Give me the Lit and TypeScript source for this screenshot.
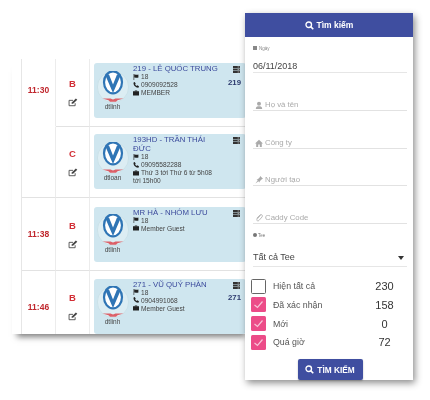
import { LitElement, html, css, svg } from "lit";
import { customElement } from "lit/decorators.js";

const flag = html`<svg class="ic" viewBox="0 0 10 10"><path d="M1 0h1v10H1z"/><path d="M2 1c2-1 3 1 7 0v5c-4 1-5-1-7 0z"/></svg>`;
const phone = html`<svg class="ic" viewBox="0 0 10 10"><path d="M1 1l2-1 1.500 3-1 1c.5 1 1.500 2 2.500 2.500l1-1 3 1.500-1 2.500C4.500 10 0 5 1 1z"/></svg>`;
const brief = html`<svg class="ic" viewBox="0 0 10 10"><path d="M3 2V1h4v1h3v7H0V2zM4 2h2v-.4H4z" fill-rule="evenodd"/></svg>`;
const server = html`<svg class="srv" viewBox="0 0 10 10"><path d="M0 0h10v2.800H0zM0 3.600h10v2.800H0zM0 7.200h10V10H0z"/><path d="M6.500 1h2.500v.8H6.500zM6.500 4.600h2.500v.8H6.500zM6.500 8.200h2.500v.8H6.500z" fill="#fff"/></svg>`;
const edit = html`<svg class="edit" viewBox="0 0 14 12"><path d="M10 7v3.500H1.500V3H7" fill="none" stroke="#444" stroke-width="1.200"/><path d="M5 8l.6-2.500L11 .5l2 1.800L7.500 7.500z" fill="#444"/></svg>`;
const logo = svg`
  <circle cx="16" cy="16" r="15.600" fill="#dcedf3" stroke="#c4dbe3" stroke-width=".6"/>
  <ellipse cx="16" cy="11.300" rx="9" ry="11" fill="#fff" stroke="#2f75b5" stroke-width="2.200"/>
  <path d="M8 3.500l8 18.500 8-18.500h-4L16 13.500 12 3.500z" fill="#2f75b5"/>
  <path d="M5.500 27.500h8l2.500 1 2.500-1h8l-6 1.800-1.500 1.500h-6l-1.500-1.500z" fill="#dc6068"/>`;
const search = html`<svg class="sr" viewBox="0 0 12 12"><circle cx="5" cy="5" r="3.700" fill="none" stroke="#fff" stroke-width="1.800"/><path d="M7.600 7.600L11 11" stroke="#fff" stroke-width="2.200"/></svg>`;

interface Row { time: string; tee: string; h: number; pad: number; user: string; name: string; lines: [string, string][]; code?: string; }
const rows: Row[] = [
  { time: "11:30", tee: "B", h: 68, pad: 4, user: "dtlinh", name: "219 - LÊ QUỐC TRUNG", code: "219", lines: [["f", "18"], ["p", "0909092528"], ["b", "MEMBER"]] },
  { time: "", tee: "C", h: 71, pad: 7, user: "dtloan", name: "193HD - TRẦN THÁI ĐỨC", lines: [["f", "18"], ["p", "09095582288"], ["b", "Thứ 3 tới Thứ 6 từ 5h08 tới 15h00"]] },
  { time: "11:38", tee: "B", h: 73, pad: 8.5, user: "dtlinh", name: "MR HÀ - NHÓM LƯU", lines: [["f", "18"], ["b", "Member Guest"]] },
  { time: "11:46", tee: "B", h: 72, pad: 7.5, user: "dtlinh", name: "271 - VŨ QUÝ PHÀN", code: "271", lines: [["f", "18"], ["p", "0904991068"], ["b", "Member Guest"]] },
];
const icons: Record<string, unknown> = { f: flag, p: phone, b: brief };

const checks = [
  { label: "Hiện tất cả", n: "230", on: false },
  { label: "Đã xác nhận", n: "158", on: true },
  { label: "Mới", n: "0", on: true },
  { label: "Quá giờ", n: "72", on: true },
];

@customElement("app-root")
export class AppRoot extends LitElement {
  static styles = css`
    :host { display: block; position: relative; width: 430px; height: 400px; background: #fff; overflow: hidden; font-family: "Liberation Sans", sans-serif; color: #444; }
    .stage { height: 400px; filter: blur(0.45px); padding-top: 59px; box-sizing: border-box; }
    .table { margin-left: 12px; width: 238px; height: 275px; padding-left: 9px; box-sizing: border-box; overflow: hidden; box-shadow: 0 8px 6px -5px rgba(0,0,0,.5); display: flex; flex-direction: column; background: #fff; }
    .row { display: grid; grid-template-columns: 34px 34px 1fr; border-left: 1px solid #e6e6e6; box-sizing: border-box; flex: none; }
    .cell { border-right: 1px solid #ececec; border-bottom: 1px solid #e2e2e2; display: flex; align-items: center; justify-content: center; box-sizing: border-box; }
    .cell.merged { border-bottom-color: transparent; padding-bottom: 5px; }
    .cell.cardcell { border-right: 0; justify-content: flex-start; align-items: flex-start; padding-left: 4px; }
    .time { font: bold 8.500px "Liberation Sans", sans-serif; color: #c0272d; }
    .teecol { flex-direction: column; gap: 9px; }
    .tee { font: bold 9.500px "Liberation Sans", sans-serif; color: #d22e35; }
    .edit { width: 10px; height: 9px; }
    .card { width: 152px; height: 55px; background: #cfe6ef; border-radius: 3px; display: flex; box-sizing: border-box; position: relative; padding: 1px 4px 2px 2px; flex: none; }
    .logo { width: 33px; flex: none; display: flex; flex-direction: column; align-items: center; font: 6.500px/7px "Liberation Sans", sans-serif; color: #444; padding-top: 6.700px; margin-right: 4px; }
    .logo svg { width: 32px; height: 32px; }
    .info { flex: 1; min-width: 0; font: 6.600px/8px "Liberation Sans", sans-serif; color: #444; padding-right: 22px; }
    .name { font-size: 7.800px; line-height: 9px; color: #3b4a9c; }
    .ln { display: block; }
    .ic { width: 6px; height: 6px; fill: #222; vertical-align: -0.5px; margin-right: 2px; }
    .srv { position: absolute; top: 3px; right: 6px; width: 7px; height: 7px; fill: #333; }
    .code { position: absolute; top: 14.500px; right: 5px; font: bold 7.800px "Liberation Sans", sans-serif; color: #2c3a6e; }

    .panel { position: absolute; left: 245px; top: 13px; width: 168px; height: 367px; background: #fff; box-shadow: 2px 3px 7px rgba(0,0,0,.45); display: flex; flex-direction: column; filter: blur(0.45px); }
    .head { height: 24px; flex: none; background: #3f4ea0; color: #fff; font: bold 8.500px "Liberation Sans", sans-serif; display: flex; align-items: center; justify-content: center; gap: 3px; }
    .sr { width: 9px; height: 9px; }
    .form { padding: 9px 6px 0 8px; display: flex; flex-direction: column; }
    .mini { font: 4.500px "Liberation Sans", sans-serif; color: #888; height: 7px; }
    .mini b { display: inline-block; width: 4px; height: 4px; background: #888; margin-right: 2px; }
    .date { font: 9px/11px "Liberation Sans", sans-serif; color: #444; height: 20px; box-sizing: border-box; padding-top: 8px; border-bottom: 1px solid #e6e6e6; margin-bottom: 22px; }
    .field { height: 16px; box-sizing: border-box; border-bottom: 1px solid #e2e2e2; margin-bottom: 21.500px; font: 7.800px/11px "Liberation Sans", sans-serif; color: #aaa; display: flex; align-items: flex-end; gap: 2px; padding: 0 0 0 2px; }
    .fi { width: 8px; height: 8px; fill: #aaa; margin-bottom: 1px; flex: none; }
    .teeL { font: 4.500px/7px "Liberation Sans", sans-serif; color: #777; height: 7px; margin-top: -13.500px; margin-bottom: 10.500px; }
    .teeL svg { width: 4px; height: 4px; fill: #777; margin-right: 1px; }
    .sel { font: 9px/13px "Liberation Sans", sans-serif; color: #444; height: 18px; box-sizing: border-box; padding: 2px 3px 0 0; display: flex; justify-content: space-between; border-bottom: 1px solid #e6e6e6; margin-bottom: 9.800px; }
    .arrow { width: 0; height: 0; border: 3.500px solid transparent; border-top: 4px solid #333; border-bottom: 0; margin-top: 5px; }
    .chk { display: grid; grid-template-columns: 15px 1fr 26px; align-items: center; height: 18.700px; column-gap: 7px; margin-left: -2px; padding-right: 9.500px; font: 8.800px "Liberation Sans", sans-serif; color: #555; }
    .box { width: 15px; height: 15px; box-sizing: border-box; border-radius: 1.500px; display: flex; }
    .box.off { border: 1.500px solid #666; }
    .box.on { background: #ec4c88; }
    .box svg { width: 15px; height: 15px; }
    .n { font-size: 11px; color: #333; text-align: center; }
    .btnrow { display: flex; justify-content: center; margin-top: 7.500px; }
    .btn { width: 65px; height: 21px; background: #3f4ea0; color: #fff; border-radius: 2px; font: bold 8.300px "Liberation Sans", sans-serif; display: flex; align-items: center; justify-content: center; gap: 3px; box-shadow: 0 1px 2px rgba(0,0,0,.25); }
  `;

  private fieldIcon(k: string) {
    const p: Record<string, string> = {
      user: "M5 1a2.200 2.200 0 0 1 0 5 2.200 2.200 0 0 1 0-5zM1 10c0-3 2-3.500 4-3.500S9 7 9 10z",
      home: "M5 1l5 4.500H8.500V10H6V7H4v3H1.500V5.500H0z",
      pin: "M6.500 0L10 3.500 8.500 4 6 6.500 5.500 8 2 4.500 3.500 4 6 1.500zM3 6L.5 9.500 4 7z",
      clip: "M7 1.500L2.500 6.500c-1 1.500 1 3 2.500 1.500l4-4.500C10 1.500 8 0 6.500 1L2 5.500",
    };
    return k === "clip"
      ? html`<svg class="fi" viewBox="0 0 10 10"><path d=${p[k]} fill="none" stroke="#aaa" stroke-width="1"/></svg>`
      : html`<svg class="fi" viewBox="0 0 10 10"><path d=${p[k]}/></svg>`;
  }

  render() {
    return html`
      <div class="stage">
        <div class="table">
          ${rows.map((r, i) => html`
            <div class="row r${i + 1}" style="height:${r.h}px">
              <div class="cell ${i === 0 ? "merged" : ""}"><span class="time">${r.time}</span></div>
              <div class="cell teecol"><span class="tee">${r.tee}</span>${edit}</div>
              <div class="cell cardcell" style="padding-top:${r.pad}px">
                <div class="card">
                  <div class="logo">
                    <svg viewBox="0 0 32 32">${logo}</svg>
                    <span>${r.user}</span>
                  </div>
                  <div class="info">
                    <div class="name">${r.name}</div>
                    ${r.lines.map(([k, t]) => html`<span class="ln">${icons[k]}${t}</span>`)}
                  </div>
                  ${server}
                  ${r.code ? html`<span class="code">${r.code}</span>` : ""}
                </div>
              </div>
            </div>`)}
        </div>
      </div>
      <aside class="panel">
        <div class="head">${search}<span>Tìm kiếm</span></div>
        <div class="form">
          <div class="mini"><b></b>Ngày</div>
          <div class="date">06/11/2018</div>
          <div class="field">${this.fieldIcon("user")}<span>Họ và tên</span></div>
          <div class="field">${this.fieldIcon("home")}<span>Công ty</span></div>
          <div class="field">${this.fieldIcon("pin")}<span>Người tạo</span></div>
          <div class="field">${this.fieldIcon("clip")}<span>Caddy Code</span></div>
          <div class="teeL"><svg viewBox="0 0 10 10"><circle cx="5" cy="5" r="5"/></svg>Tee</div>
          <div class="sel"><span>Tất cả Tee</span><span class="arrow"></span></div>
          ${checks.map((c) => html`
            <div class="chk">
              <span class="box ${c.on ? "on" : "off"}">${c.on ? html`<svg viewBox="0 0 15 15"><path d="M3.500 8l3 2.500 5-6" fill="none" stroke="#f7c4d8" stroke-width="1.200"/></svg>` : ""}</span>
              <span>${c.label}</span>
              <span class="n">${c.n}</span>
            </div>`)}
          <div class="btnrow"><div class="btn">${search}<span>TÌM KIẾM</span></div></div>
        </div>
      </aside>
    `;
  }
}
